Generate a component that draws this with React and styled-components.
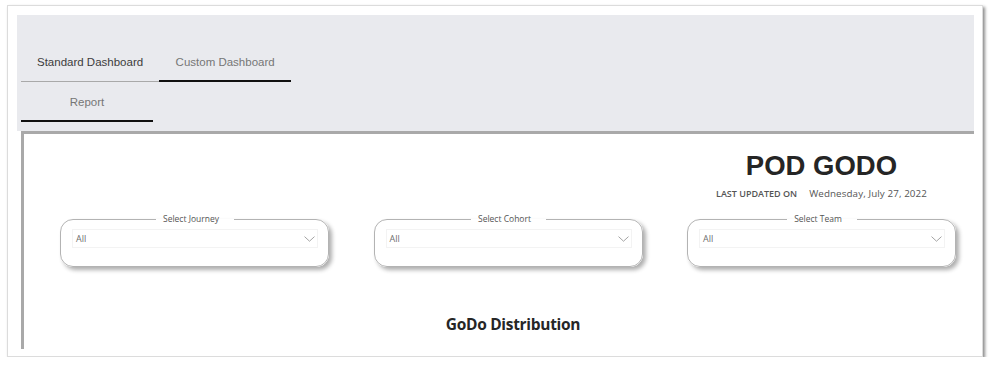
import React from "react";
import styled, { createGlobalStyle } from "styled-components";

const GlobalStyle = createGlobalStyle`
  body {
    margin: 0;
    background: #ffffff;
    font-family: "Open Sans", "Noto Sans", sans-serif;
  }
`;

const Frame = styled.div`
  box-sizing: border-box;
  width: 976px;
  height: 352px;
  margin: 5px 0 0 7px;
  padding: 9px 8px 7px 9px;
  border: 1px solid #dcdcdc;
  box-shadow: 2px 2px 3px rgba(0, 0, 0, 0.45);
  background: #ffffff;
  display: flex;
  flex-direction: column;
`;

const Header = styled.div`
  background: #e9eaee;
  padding: 27px 0 9px 4px;
`;

const Tabs = styled.div`
  display: flex;
  flex-wrap: wrap;
  width: 290px;
`;

const Tab = styled.div`
  box-sizing: border-box;
  min-width: 132px;
  height: 40px;
  padding: 0 16px;
  display: flex;
  align-items: center;
  justify-content: center;
  font-family: "Liberation Sans", Arial, sans-serif;
  font-size: 11.5px;
  color: ${(p) => (p.$dark ? "#3c3c3c" : "#767676")};
  border-bottom: ${(p) => (p.$active ? "2.5px solid #111111" : "1px solid #a9a9a9")};
  padding-top: ${(p) => (p.$active ? "1px" : "0")};
`;

const Panel = styled.div`
  flex: 1;
  margin-left: 4px;
  background: #ffffff;
  border-top: 3px solid #a9a9a9;
  border-left: 3px solid #a9a9a9;
  overflow: hidden;
`;

const FilterRow = styled.div`
  display: grid;
  grid-template-columns: repeat(3, 269px);
  column-gap: 44.5px;
  align-items: end;
  padding: 16px 0 0 36px;
`;

const TitleBlock = styled.div`
  display: flex;
  flex-direction: column;
  align-items: center;
  margin-bottom: 12px;
`;

const Title = styled.div`
  font-family: "Liberation Sans", Arial, sans-serif;
  font-weight: 700;
  font-size: 27.5px;
  line-height: 32px;
  color: #252525;
`;

const Updated = styled.div`
  display: flex;
  align-items: center;
  gap: 12px;
  margin-top: 5px;
  line-height: 14px;
  color: #555555;
`;

const UpdatedLabel = styled.span`
  font-size: 9px;
  font-weight: 600;
`;

const UpdatedDate = styled.span`
  font-size: 9.8px;
  letter-spacing: 0.1px;
`;

const Dropdown = styled.fieldset`
  box-sizing: border-box;
  min-width: 0;
  margin: 0;
  padding: 4px 10px 18px 11px;
  border: 1px solid #b3b3b3;
  border-radius: 13px;
  box-shadow: 3px 3px 4px rgba(0, 0, 0, 0.32);
  background: #ffffff;
`;

const Legend = styled.legend`
  margin: 0 auto;
  padding: 0 15px 0 7px;
  font-size: 8.5px;
  line-height: 12px;
  color: #555555;
`;

const SelectBox = styled.div`
  box-sizing: border-box;
  height: 19px;
  display: flex;
  align-items: center;
  justify-content: space-between;
  padding: 0 2px 0 3px;
  border: 1px solid #f3f3f3;
  font-size: 9px;
  color: #6e6e6e;
`;

const SectionTitle = styled.div`
  margin-top: 47px;
  padding-left: 28px;
  text-align: center;
  font-size: 15.5px;
  font-weight: 700;
  line-height: 20px;
  color: #262626;
  letter-spacing: -0.3px;
`;

const Chevron = () => (
  <svg width="11" height="6" viewBox="0 0 11 6">
    <path d="M0.5 0.6 L5.5 5.2 L10.5 0.6" fill="none" stroke="#9a9a9a" strokeWidth="0.9" />
  </svg>
);

function Select({ label }) {
  return (
    <Dropdown>
      <Legend>{label}</Legend>
      <SelectBox>
        <span>All</span>
        <Chevron />
      </SelectBox>
    </Dropdown>
  );
}

export default function App() {
  return (
    <>
      <GlobalStyle />
      <Frame>
        <Header>
          <Tabs>
            <Tab $dark>Standard Dashboard</Tab>
            <Tab $active>Custom Dashboard</Tab>
            <Tab $active>Report</Tab>
          </Tabs>
        </Header>
        <Panel>
          <FilterRow>
            <Select label="Select Journey" />
            <Select label="Select Cohort" />
            <div>
              <TitleBlock>
                <Title>POD GODO</Title>
                <Updated>
                  <UpdatedLabel>LAST UPDATED ON</UpdatedLabel>
                  <UpdatedDate>Wednesday, July 27, 2022</UpdatedDate>
                </Updated>
              </TitleBlock>
              <Select label="Select Team" />
            </div>
          </FilterRow>
          <SectionTitle>GoDo Distribution</SectionTitle>
        </Panel>
      </Frame>
    </>
  );
}
